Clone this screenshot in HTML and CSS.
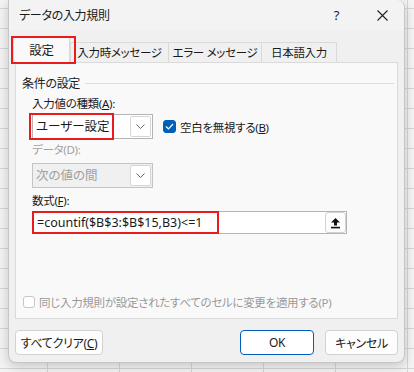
FILE: index.html
```html
<!DOCTYPE html>
<html lang="ja">
<head>
<meta charset="UTF-8">
<meta name="viewport" content="width=device-width, initial-scale=1.0">
<title>データの入力規則</title>
<link rel="stylesheet" href="styles.css">
</head>
<body>

<div class="dialog">
  <div class="titlebar">
    <span class="title">データの入力規則</span>
    <span class="help">?</span>
    <svg class="close" width="11" height="11" viewBox="0 0 11 11"><path d="M0.5 0.5L10.5 10.5M10.5 0.5L0.5 10.5" stroke="#222" stroke-width="1.1"/></svg>
  </div>

  <div class="content">
    <div class="tabs">
      <div class="tab tab-main active">設定</div>
      <div class="tab tab-input">入力時メッセージ</div>
      <div class="tab tab-error">エラー メッセージ</div>
      <div class="tab tab-ime">日本語入力</div>
    </div>

    <div class="panel">
      <div class="group-title"><span>条件の設定</span></div>

      <div class="field">
        <div class="label">入力値の種類(<u>A</u>):</div>
        <div class="row">
          <div class="select type-select">
            <span class="value">ユーザー設定</span>
            <span class="arrow"><svg width="9" height="5" viewBox="0 0 9 5"><path d="M0.5 0.5L4.5 4.5L8.5 0.5" fill="none" stroke="#666" stroke-width="1"/></svg></span>
            <span class="mark"></span>
          </div>
          <label class="check">
            <span class="box checked"><svg width="9" height="7" viewBox="0 0 9 7"><path d="M1 3.5L3.5 6L8 1" fill="none" stroke="#fff" stroke-width="1.2"/></svg></span>
            <span>空白を無視する(<u>B</u>)</span>
          </label>
        </div>
      </div>

      <div class="field disabled">
        <div class="label">データ(D):</div>
        <div class="select data-select">
          <span class="value">次の値の間</span>
          <span class="arrow"><svg width="9" height="5" viewBox="0 0 9 5"><path d="M0.5 0.5L4.5 4.5L8.5 0.5" fill="none" stroke="#666" stroke-width="1"/></svg></span>
        </div>
      </div>

      <div class="field formula-field">
        <div class="label">数式(<u>F</u>):</div>
        <div class="formula">
          <span class="formula-text">=countif($B$3:$B$15,B3)&lt;=1</span>
          <span class="ref-btn"><svg width="11" height="12" viewBox="0 0 11 12"><path d="M5.5 1L10 5.5H7V8.5H4V5.5H1Z" fill="#111"/><rect x="1" y="9.8" width="9" height="1.6" fill="#111"/></svg></span>
          <span class="mark"></span>
        </div>
      </div>

      <label class="check apply">
        <span class="box"></span>
        <span>同じ入力規則が設定されたすべてのセルに変更を適用する(P)</span>
      </label>
    </div>

    <div class="buttons">
      <button class="btn btn-clear">すべてクリア(<u>C</u>)</button>
      <div class="spacer"></div>
      <button class="btn primary">OK</button>
      <button class="btn">キャンセル</button>
    </div>
  </div>
</div>

</body>
</html>
```

FILE: styles.css
```css
/* Excel style dialog over a sheet */
body {
  margin: 0;
  height: 372px;
  overflow: hidden;
  font-family: "Noto Sans", "Noto Sans CJK JP", sans-serif;
  font-size: 11.5px;
  letter-spacing: -0.3px;
  font-feature-settings: "palt";
  color: #1a1a1a;
  background-color: #f4f4f4;
  background-image:
    repeating-linear-gradient(to right, transparent 0 47px, #d6d6d6 47px 48px, transparent 48px 72px),
    repeating-linear-gradient(to bottom, transparent 0 8px, #d6d6d6 8px 9px, transparent 9px 20px);
  background-size: 72px 100%, 100% 20px;
}
.dialog {
  width: 397px;
  height: 363px;
  margin-left: 8px;
  background: #f0f0f0;
  border: 1px solid #c6c6c6;
  border-top: none;
  border-radius: 0 8px 8px 8px;
  box-shadow: 0 3px 12px rgba(0, 0, 0, 0.2);
  box-sizing: border-box;
  display: flex;
  flex-direction: column;
}
.titlebar {
  height: 30px;
  display: flex;
  align-items: center;
  padding-left: 10px;
  background: #f3f3f3;
  border-radius: 0 8px 0 0;
}
.title {
  flex: 1;
  font-size: 12px;
}
.help {
  font-size: 13px;
  margin-right: 38px;
}
.close {
  margin-right: 16px;
}

/* red annotation boxes */
.mark,
.tab-main::after {
  position: absolute;
  border: 2px solid #e81c1c;
  box-sizing: border-box;
  pointer-events: none;
}

/* tabs + panel */
.content {
  flex: 1;
  padding: 7px 6px 0 6px;
  display: flex;
  flex-direction: column;
}
.tabs {
  display: flex;
  align-items: flex-end;
  height: 25px;
}
.tab {
  height: 20px;
  line-height: 19px;
  text-align: center;
  border: 1px solid #dadada;
  border-bottom: none;
  margin-right: -1px;
  background: #f0f0f0;
  box-sizing: border-box;
}
.tab-main {
  width: 57px;
  height: 26px;
  line-height: 25px;
  margin-left: -2px;
  margin-bottom: -1px;
  margin-right: 0;
  font-size: 12.5px;
  background: #f9f9f9;
  position: relative;
  z-index: 1;
}
.tab-main::after {
  content: "";
  left: -3px;
  top: -2px;
  width: 65px;
  height: 28px;
}
.tab-input { width: 99px; }
.tab-error { width: 94px; }
.tab-ime { width: 76px; }
.panel {
  height: 257px;
  background: #f9f9f9;
  border: 1px solid #dadada;
  box-sizing: border-box;
  padding: 12px 3px 0 6px;
}
.group-title {
  display: flex;
  align-items: center;
  gap: 5px;
  height: 16px;
  font-size: 12px;
}
.group-title::after {
  content: "";
  flex: 1;
  border-top: 1px solid #dedede;
}

/* fields */
.field {
  padding-left: 10px;
  margin-top: 5px;
}
.label {
  height: 16px;
  line-height: 16px;
  margin-bottom: 2px;
}
.disabled {
  margin-top: 3px;
  color: #a0a0a0;
}
.disabled .label {
  margin-bottom: 5px;
}
.formula-field {
  margin-top: 5px;
}
.row {
  display: flex;
  align-items: center;
  gap: 10px;
}
.select {
  width: 121px;
  height: 25px;
  border: 1px solid #b4b4b4;
  background: #fff;
  box-sizing: border-box;
  display: flex;
  align-items: stretch;
  position: relative;
}
.select .value {
  flex: 1;
  line-height: 23px;
  padding-left: 3px;
  font-size: 12.5px;
  letter-spacing: 0;
}
.type-select .mark {
  left: -4px;
  top: -2px;
  width: 85px;
  height: 27px;
}
.arrow {
  width: 19px;
  margin: 1px;
  border: 1px solid #d6d6d6;
  border-radius: 2px;
  background: #fff;
  display: flex;
  align-items: center;
  justify-content: center;
}
.disabled .select {
  background: #f0f0f0;
  border-color: #c4c4c4;
}
.check {
  display: flex;
  align-items: center;
  gap: 4px;
}
.box {
  width: 13px;
  height: 13px;
  border: 1px solid #9a9a9a;
  border-radius: 3px;
  box-sizing: border-box;
  display: flex;
  align-items: center;
  justify-content: center;
  background: #fff;
}
.box.checked {
  background: #005fb8;
  border-color: #005fb8;
}
.formula {
  width: 315px;
  height: 23px;
  border: 1px solid #b4b4b4;
  background: #fff;
  box-sizing: border-box;
  display: flex;
  align-items: center;
  position: relative;
}
.formula .mark {
  left: -1px;
  top: -1px;
  width: 187px;
  height: 23px;
}
.formula-text {
  padding-left: 4px;
  font-size: 12.5px;
  letter-spacing: 0;
  margin-right: auto;
}
.ref-btn {
  width: 19px;
  height: 19px;
  border: 1px solid #d2d2d2;
  border-radius: 3px;
  background: #fdfdfd;
  display: flex;
  align-items: center;
  justify-content: center;
}
.check.apply {
  margin-top: 60px;
  margin-left: 1px;
  color: #9a9a9a;
}
.check.apply .box {
  width: 12px;
  height: 12px;
  border-color: #c6c6c6;
}

/* bottom buttons */
.buttons {
  display: flex;
  gap: 11px;
  margin-top: 11px;
}
.spacer {
  flex: 1;
}
.btn {
  height: 25px;
  width: 73px;
  padding: 0;
  font-family: inherit;
  font-size: 12px;
  letter-spacing: -0.3px;
  font-feature-settings: "palt";
  color: #1a1a1a;
  background: #fdfdfd;
  border: 1px solid #d2d2d2;
  border-radius: 4px;
}
.btn-clear {
  width: 88px;
}
.btn.primary {
  width: 74px;
  border-color: #005fb8;
  background: #fff;
}
```
